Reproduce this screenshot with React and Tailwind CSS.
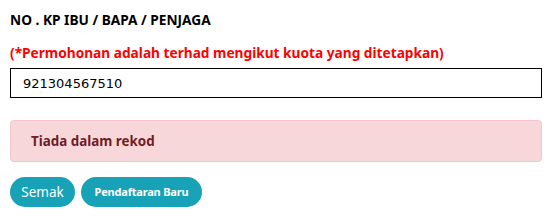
import React, { useState } from 'react';

const App = () => {
  const [noKp, setNoKp] = useState('921304567510');

  return (
    <div className="w-[553px] h-[216px] bg-white px-[10px] pt-[12px] font-['Noto_Sans',sans-serif]">
      <h3 className="text-[13.7px] font-bold text-black leading-[16px]">NO . KP IBU / BAPA / PENJAGA</h3>
      <p className="mt-[16px] text-[13.7px] font-bold text-[#ff0000] leading-[17px]">
        (*Permohonan adalah terhad mengikut kuota yang ditetapkan)
      </p>
      <input
        type="text"
        value={noKp}
        onChange={(e) => setNoKp(e.target.value)}
        className="mt-[7px] block w-[532px] h-[30px] border border-black px-[12px] text-[13px] text-black font-['DejaVu_Sans',sans-serif] outline-none"
      />

      <div className="mt-[22px] w-[532px] h-[42px] flex items-center px-[20px] bg-[#f8d7da] border border-[#f5c6cb] rounded-[4px]">
        <span className="text-[13.4px] font-bold text-[#721c24]">Tiada dalam rekod</span>
      </div>

      <div className="mt-[15px] flex gap-[6px]">
        <button className="h-[30px] w-[65px] rounded-full bg-[#17a2b8] text-white text-[13.5px]">Semak</button>
        <button className="h-[30px] w-[121px] rounded-full bg-[#17a2b8] text-white text-[11px] font-bold tracking-[-0.2px]">
          Pendaftaran Baru
        </button>
      </div>
    </div>
  );
};

export default App;
